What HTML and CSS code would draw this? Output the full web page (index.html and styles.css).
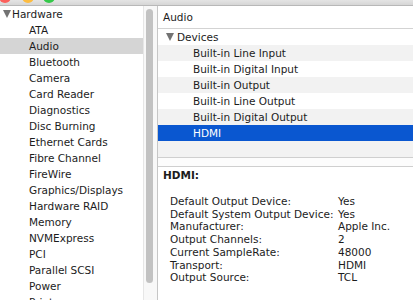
FILE: index.html
```html
<!DOCTYPE html>
<html>
<head>
<meta charset="utf-8">
<link rel="stylesheet" href="styles.css">
</head>
<body>
<div class="window">
  <div class="titlebar">
    <span class="light red"></span>
    <span class="light yellow"></span>
    <span class="light green"></span>
  </div>
  <div class="main">
    <div class="sidebar">
      <ul class="tree">
        <li class="group"><span class="tri"></span>Hardware</li>
        <li>ATA</li>
        <li class="sel">Audio</li>
        <li>Bluetooth</li>
        <li>Camera</li>
        <li>Card Reader</li>
        <li>Diagnostics</li>
        <li>Disc Burning</li>
        <li>Ethernet Cards</li>
        <li>Fibre Channel</li>
        <li>FireWire</li>
        <li>Graphics/Displays</li>
        <li>Hardware RAID</li>
        <li>Memory</li>
        <li>NVMExpress</li>
        <li>PCI</li>
        <li>Parallel SCSI</li>
        <li>Power</li>
        <li>Printers</li>
      </ul>
      <div class="scrollbar"><div class="thumb"></div></div>
    </div>
    <div class="content">
      <div class="table">
        <div class="thead">Audio</div>
        <div class="trow white"><span class="tri"></span>Devices</div>
        <div class="trow gray child">Built-in Line Input</div>
        <div class="trow white child">Built-in Digital Input</div>
        <div class="trow gray child">Built-in Output</div>
        <div class="trow white child">Built-in Line Output</div>
        <div class="trow gray child">Built-in Digital Output</div>
        <div class="trow blue child">HDMI</div>
        <div class="trow gray"></div>
      </div>
      <div class="splitter"></div>
      <div class="details">
        <div class="dtitle">HDMI:</div>
        <dl class="props">
          <dt>Default Output Device:</dt><dd>Yes</dd>
          <dt>Default System Output Device:</dt><dd>Yes</dd>
          <dt>Manufacturer:</dt><dd>Apple Inc.</dd>
          <dt>Output Channels:</dt><dd>2</dd>
          <dt>Current SampleRate:</dt><dd>48000</dd>
          <dt>Transport:</dt><dd>HDMI</dd>
          <dt>Output Source:</dt><dd>TCL</dd>
        </dl>
      </div>
    </div>
  </div>
</div>
</body>
</html>
```
FILE: styles.css
```css
* { box-sizing: border-box; }
html, body {
  margin: 0;
  padding: 0;
  width: 413px;
  height: 300px;
  overflow: hidden;
  background: #fff;
  font-family: "DejaVu Sans", "Liberation Sans", sans-serif;
  font-size: 10.5px;
  color: #1c1c1c;
}
.window {
  display: flex;
  flex-direction: column;
  height: 300px;
}
.titlebar {
  position: relative;
  height: 6px;
  flex: none;
  background: linear-gradient(#e4e4e4, #d6d6d6);
  border-bottom: 1px solid #b8b8b8;
  overflow: hidden;
}
.light {
  position: absolute;
  top: -9px;
  width: 12px;
  height: 12px;
  border-radius: 50%;
}
.red { left: -1px; background: #fc605c; }
.yellow { left: 21.5px; background: #fdbc40; }
.green { left: 43px; background: #34c84a; }

.main {
  flex: 1;
  display: flex;
  min-height: 0;
}
.sidebar {
  width: 158px;
  flex: none;
  display: flex;
  border-right: 1px solid #c6c6c6;
}
.tree {
  list-style: none;
  margin: 0;
  padding: 0;
  width: 143px;
  flex: none;
  overflow: hidden;
}
.tree li {
  height: 16px;
  line-height: 16px;
  padding-left: 29px;
  white-space: nowrap;
}
.tree li.group {
  padding-left: 3px;
  display: flex;
  align-items: center;
}
.tri {
  display: inline-block;
  width: 0;
  height: 0;
  border-left: 4.5px solid transparent;
  border-right: 4.5px solid transparent;
  border-top: 8px solid #737373;
  margin-right: 1px;
}
.tree li.sel {
  background: #d5d5d5;
}
.scrollbar {
  width: 14px;
  flex: none;
  background: #f8f8f8;
  border-left: 1px solid #e6e6e6;
  padding: 3px 0 0 2px;
}
.thumb {
  width: 7px;
  height: 274px;
  background: #c2c2c2;
  border-radius: 4px;
}

.content {
  flex: 1;
  display: flex;
  flex-direction: column;
  min-width: 0;
}
.table {
  border-bottom: 1px solid #cfcfcf;
}
.thead {
  height: 23px;
  line-height: 22px;
  padding-left: 5px;
  border-bottom: 1px solid #d3d3d3;
  background: #fff;
}
.trow {
  height: 16px;
  line-height: 16px;
  padding-left: 8px;
  display: flex;
  align-items: center;
  white-space: nowrap;
}
.trow .tri { margin-right: 3px; }
.trow.child { padding-left: 35px; }
.white { background: #fff; }
.gray { background: #f2f2f2; }
.blue { background: #0a57d0; color: #fff; }

.splitter {
  height: 9px;
  background: #fcfcfc;
  border-bottom: 1px solid #cfcfcf;
  flex: none;
}
.details {
  flex: 1;
  padding: 2px 0 0 5px;
}
.dtitle {
  font-weight: bold;
  line-height: 13px;
  height: 26px;
}
.props {
  margin: 0;
  padding-left: 7px;
  display: grid;
  grid-template-columns: 168px auto;
  line-height: 12.7px;
}
.props dt, .props dd {
  margin: 0;
  white-space: nowrap;
}
```
